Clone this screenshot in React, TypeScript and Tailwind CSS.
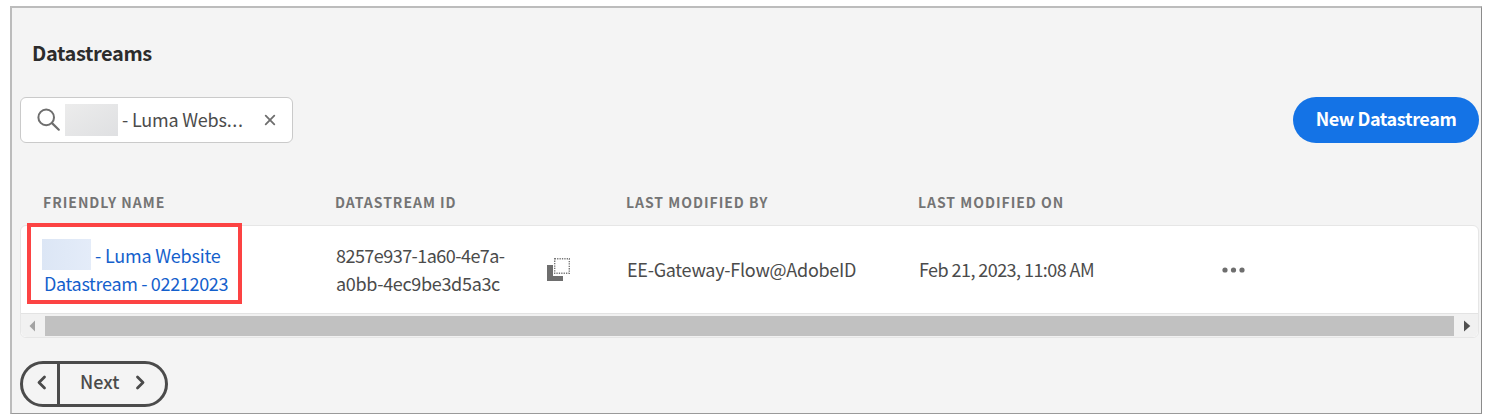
import type { ReactNode } from "react";

function HeaderCell({ children }: { children: ReactNode }) {
  return <div className="text-[14px] font-bold leading-5 tracking-[0.98px] text-[#747474]">{children}</div>;
}

function CopyIcon() {
  return (
    <svg width="24" height="24" viewBox="0 0 24 24" aria-hidden="true">
      <path d="M0 7h6v11h10v5H0z" fill="#6e6e6e" />
      <rect x="7.7" y="0.7" width="14.6" height="14.6" fill="none" stroke="#777" strokeWidth="1.4" strokeDasharray="1.3 1.1" />
    </svg>
  );
}

export default function App() {
  return (
    <div className="h-[418px] w-[1495px] bg-white pl-[10px] pt-[6px] font-['Noto_Sans_CJK_SC','Open_Sans',sans-serif] text-[18px] leading-[28px] text-[#4b4b4b]">
      <main className="flex h-[408px] w-[1472px] flex-col border-b border-l-2 border-r border-t-2 border-b-[#999] border-l-[#bcbcbc] border-r-[#8b8b8b] border-t-[#bcbcbc] bg-[#f4f4f4] pl-2 pr-[2px]">
        <h1 className="ml-3 mt-[31px] h-7 whitespace-nowrap text-[20px] font-bold tracking-[-0.4px] text-[#2c2c2c]">
          Datastreams
        </h1>

        <div className="mt-[30px] flex h-[46px] items-center justify-between">
          <div className="flex h-[46px] w-[273px] items-center rounded-md border border-[#cacaca] bg-white pl-4">
            <svg width="25" height="25" viewBox="0 0 25 25" fill="none" stroke="#6e6e6e" strokeWidth="2" strokeLinecap="round" aria-hidden="true">
              <circle cx="9.2" cy="9.4" r="7.8" />
              <path d="m15 15.1 6.8 6.6" strokeWidth="2.2" />
            </svg>
            <span className="ml-[3px] h-8 w-[53px] bg-linear-to-br from-[#ececec] to-[#dfe0e2]" />
            <span className="ml-1 w-[125px] whitespace-nowrap pb-[3px] tracking-[-0.2px]">- Luma Webs<span className="tracking-[0.6px]">...</span></span>
            <svg className="ml-[17px]" width="12" height="12" viewBox="0 0 12 12" stroke="#6e6e6e" strokeWidth="1.8" strokeLinecap="round" aria-hidden="true">
              <path d="m1.7 1.7 8.6 8.6M10.3 1.7 1.7 10.3" />
            </svg>
          </div>
          <button className="h-[46px] w-[186px] whitespace-nowrap rounded-full bg-[#1473e6] pb-1 text-[18px] font-bold tracking-[-0.4px] text-white">
            New Datastream
          </button>
        </div>

        <div className="mt-[49px] grid h-[33px] grid-cols-[292px_291px_292px_1fr] whitespace-nowrap pl-[23px]">
          <HeaderCell>FRIENDLY NAME</HeaderCell>
          <HeaderCell>DATASTREAM ID</HeaderCell>
          <HeaderCell>LAST MODIFIED BY</HeaderCell>
          <HeaderCell>LAST MODIFIED ON</HeaderCell>
        </div>

        <section className="relative h-[113px] rounded-md border border-[#e6e6e6] bg-white">
          <div className="grid h-[87px] grid-cols-[292px_291px_292px_303px_1fr] items-center whitespace-nowrap pl-[23px]">
            <a href="#" className="block pb-[2px] text-[#1460cc]">
              <span className="flex h-7 items-center">
                <span className="-ml-[2px] h-[31px] w-[49px] bg-linear-to-r from-[#dce6f5] to-[#e4ecf9]" />
                <span className="ml-1 tracking-[-0.2px]">- Luma Website</span>
              </span>
              <span className="block tracking-[-0.33px]">Datastream - 02212023</span>
            </a>
            <div className="flex items-center">
              <div className="w-[211px] pb-[2px]">
                <div className="tracking-[-0.54px]">8257e937-1a60-4e7a-</div>
                <div className="tracking-[-0.32px]">a0bb-4ec9be3d5a3c</div>
              </div>
              <CopyIcon />
            </div>
            <div className="pb-[2px] tracking-[-0.27px]">EE-Gateway-Flow@AdobeID</div>
            <div className="pb-[2px] tracking-[-0.56px]">Feb 21, 2023, 11:08 AM</div>
            <svg width="24" height="6" viewBox="0 0 24 6" fill="#6e6e6e" aria-hidden="true">
              <circle cx="3" cy="3" r="2.6" />
              <circle cx="11.5" cy="3" r="2.6" />
              <circle cx="20" cy="3" r="2.6" />
            </svg>
          </div>
          <div className="flex h-6 items-center rounded-b-md border-t border-[#e3e3e3] bg-[#f1f1f1]">
            <svg className="ml-2" width="7" height="12" viewBox="0 0 7 12" aria-hidden="true"><path d="M6 0.5v11L0.5 6z" fill="#a3a3a3" /></svg>
            <div className="ml-[9px] h-5 w-[1409px] bg-[#c1c1c1]" />
            <svg className="ml-[10px]" width="7" height="12" viewBox="0 0 7 12" aria-hidden="true"><path d="M0 0.5v11L6.3 6z" fill="#505050" /></svg>
          </div>
          <div className="pointer-events-none absolute -top-[3px] left-[6px] h-[81px] w-[215px] border-4 border-[#fc4343]" />
        </section>

        <nav className="mt-[23px] flex h-[46px] w-[148px] items-center rounded-full border-3 border-[#4b4b4b] font-medium">
          <button aria-label="Previous" className="flex h-full w-[37px] items-center justify-end border-r-3 border-[#4b4b4b] pb-[3px] pr-[10px]">
            <svg width="10" height="15" viewBox="0 0 10 15" fill="none" stroke="#4b4b4b" strokeWidth="2.8" strokeLinecap="round" strokeLinejoin="round" aria-hidden="true"><path d="M7.5 2 2 7.5 7.5 13" /></svg>
          </button>
          <button className="flex items-center whitespace-nowrap pb-1 pl-5">
            <span className="w-[55px] pb-[2px] text-left">Next</span>
            <svg width="10" height="15" viewBox="0 0 10 15" fill="none" stroke="#4b4b4b" strokeWidth="2.8" strokeLinecap="round" strokeLinejoin="round" aria-hidden="true"><path d="m2.5 2 5.5 5.5L2.5 13" /></svg>
          </button>
        </nav>
      </main>
    </div>
  );
}
